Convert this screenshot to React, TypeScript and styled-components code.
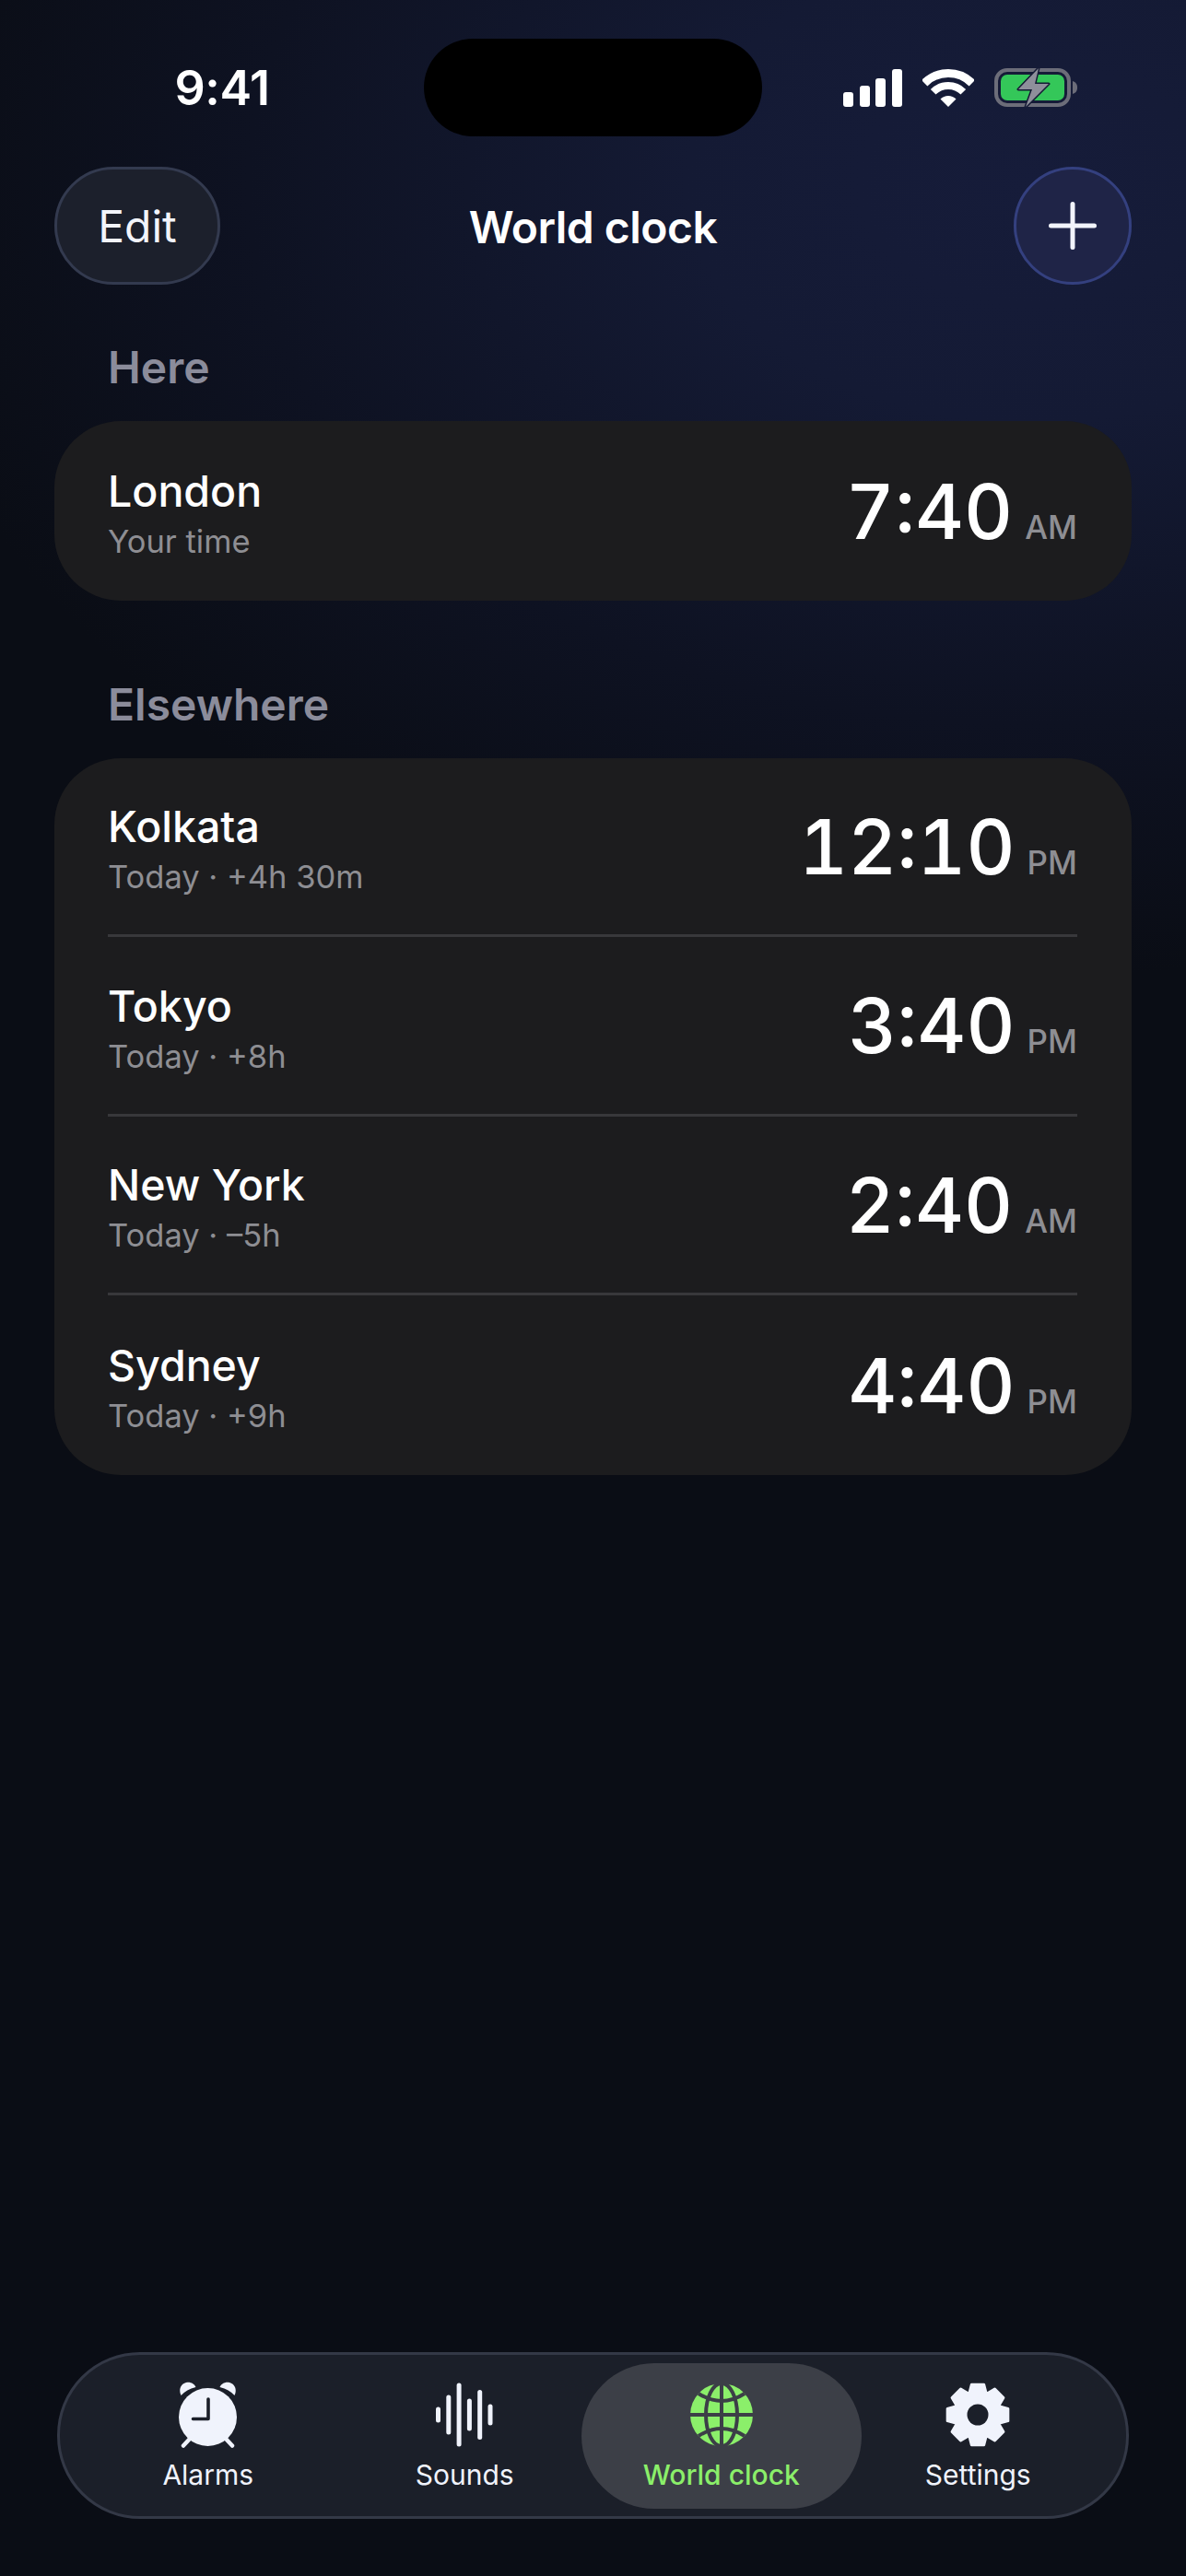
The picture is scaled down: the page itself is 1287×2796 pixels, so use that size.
import React from 'react';
import styled, { createGlobalStyle } from 'styled-components';

const GlobalStyle = createGlobalStyle`
  html, body {
    margin: 0;
    padding: 0;
    background: #0a0d15;
    font-family: Inter, "Noto Sans", sans-serif;
    color: #fff;
  }
`;

const BAR_BG = '#1b1f29';
const PILL_BG = '#3c3f47';

const Screen = styled.div`
  width: 1287px;
  height: 2796px;
  display: flex;
  flex-direction: column;
  overflow: hidden;
  background:
    radial-gradient(ellipse 1250px 860px at 1120px 200px, #161c3a 0%, #141a34 30%, #0e1222 68%, rgba(10, 13, 21, 0) 100%),
    #0a0d15;
`;

const StatusBar = styled.div`
  display: grid;
  grid-template-columns: 460px 367px 460px;
  align-items: center;
  padding-top: 41px;
`;

const Clock = styled.div`
  justify-self: center;
  padding: 2px 0 0 22px;
  font-size: 52px;
  font-weight: 600;
  line-height: 106px;
  letter-spacing: -0.5px;
`;

const Island = styled.div`
  height: 106px;
  border-radius: 53px;
  background: #000;
`;

const StatusIcons = styled.div`
  display: flex;
  align-items: center;
  gap: 22px;
  padding-left: 88px;
  height: 106px;
`;

const Header = styled.div`
  display: grid;
  grid-template-columns: 1fr auto 1fr;
  align-items: center;
  padding: 0 59px;
  margin-top: 32px;
`;

const EditButton = styled.div`
  justify-self: start;
  box-sizing: border-box;
  width: 180px;
  height: 128px;
  border-radius: 64px;
  background: #1c202c;
  border: 3px solid #333a4f;
  display: flex;
  align-items: center;
  justify-content: center;
  font-size: 48px;
  color: #f2f4fb;
`;

const Title = styled.div`
  padding-top: 2px;
  font-size: 48px;
  font-weight: 600;
  letter-spacing: -0.5px;
`;

const AddButton = styled.div`
  justify-self: end;
  box-sizing: border-box;
  width: 128px;
  height: 128px;
  border-radius: 50%;
  background: #1f2447;
  border: 3px solid #34407f;
  display: flex;
  align-items: center;
  justify-content: center;
`;

const SectionLabel = styled.div<{ $top: number }>`
  margin-top: ${(p) => p.$top}px;
  padding-left: 117px;
  height: 56px;
  line-height: 56px;
  font-size: 48px;
  font-weight: 600;
  color: #8b8c9b;
`;

const Card = styled.div`
  margin: 30px 59px 0;
  padding: 0 59px 0 58px;
  background: #1c1c1e;
  border-radius: 72px;
`;

const Row = styled.div<{ $divider?: boolean }>`
  height: 194.5px;
  box-sizing: border-box;
  display: flex;
  align-items: center;
  justify-content: space-between;
  border-bottom: ${(p) => (p.$divider ? '3px solid #38383b' : 'none')};
`;

const Place = styled.div`
  display: flex;
  flex-direction: column;
  gap: 5px;
  padding-top: 9px;
`;

const City = styled.div`
  font-size: 46.5px;
  font-weight: 500;
  line-height: 54px;
`;

const Note = styled.div`
  font-size: 34.5px;
  line-height: 46px;
  color: #8e8e93;
`;

const TimeBlock = styled.div`
  display: flex;
  align-items: baseline;
  gap: 13px;
  padding-top: 3px;
`;

const TimeValue = styled.span`
  font-size: 82px;
  font-weight: 500;
  line-height: 96px;
  font-variant-numeric: tabular-nums;
`;

const Meridiem = styled.span`
  font-size: 35px;
  font-weight: 500;
  color: #8e8e93;
`;

const TabBar = styled.div`
  margin: auto 62px 62px;
  box-sizing: border-box;
  height: 181px;
  border-radius: 90px;
  background: ${BAR_BG};
  border: 3px solid #333846;
  display: grid;
  grid-template-columns: repeat(4, 278.5px);
  justify-content: center;
  align-items: center;
`;

const Tab = styled.div<{ $active?: boolean }>`
  box-sizing: border-box;
  height: 158px;
  margin: 0 ${(p) => (p.$active ? '-13px' : '0')};
  padding-top: 20px;
  border-radius: 79px;
  background: ${(p) => (p.$active ? PILL_BG : 'transparent')};
  display: flex;
  flex-direction: column;
  align-items: center;
`;

const TabIcon = styled.div`
  height: 72px;
  display: flex;
  align-items: center;
  justify-content: center;
`;

const TabLabel = styled.div<{ $active?: boolean }>`
  margin-top: 9px;
  font-size: 30px;
  line-height: 40px;
  font-weight: ${(p) => (p.$active ? 500 : 400)};
  color: ${(p) => (p.$active ? '#8bef6a' : '#f0f3fc')};
`;

const Signal = () => (
  <svg width="64" height="41" viewBox="0 0 64 41" fill="#fff">
    <rect x="0" y="25" width="11" height="16" rx="3" />
    <rect x="18" y="18" width="11" height="23" rx="3" />
    <rect x="35" y="10" width="11" height="31" rx="3" />
    <rect x="53" y="0" width="11" height="41" rx="3" />
  </svg>
);

const Wifi = () => (
  <svg width="56" height="41" viewBox="0 0 56 41" fill="none" stroke="#fff">
    <path d="M2.2 15.2 A36.5 36.5 0 0 1 53.8 15.2" strokeWidth="9" />
    <path d="M11.7 24.7 A23 23 0 0 1 44.3 24.7" strokeWidth="8" />
    <path d="M19.5 32.5 A12 12 0 0 1 36.5 32.5 L28 41 Z" fill="#fff" stroke="none" />
  </svg>
);

const Battery = () => (
  <svg width="90" height="42" viewBox="0 0 90 42">
    <rect x="2" y="2" width="79" height="38" rx="12" fill="none" stroke="#6c6d79" strokeWidth="4" />
    <rect x="7" y="7" width="69" height="28" rx="7" fill="#34c759" />
    <path d="M85 14 C88 15 90 17 90 21 C90 25 88 27 85 28 Z" fill="#6c6d79" />
    <path d="M48 0 L26 23 L41 23 L34 42 L59 17 L44 17 Z" fill="#8e8f9b" stroke="#151a35" strokeWidth="3" strokeLinejoin="round" paintOrder="stroke" />
  </svg>
);

const Plus = () => (
  <svg width="52" height="52" viewBox="0 0 52 52" stroke="#f2f4fb" strokeWidth="5" strokeLinecap="round">
    <path d="M26 2.5 V49.5 M2.5 26 H49.5" />
  </svg>
);

const AlarmIcon = () => (
  <svg width="63" height="72" viewBox="0 0 63 72" fill="#f0f3fc">
    <circle cx="31.5" cy="38.5" r="31.5" />
    <path d="M2.5 15 C-0.5 9 2 2 9 0.8 C13 0.2 17 2.4 18.5 6 C11.5 7.8 6.5 10.5 2.5 15 Z" />
    <path d="M60.5 15 C63.5 9 61 2 54 0.8 C50 0.2 46 2.4 44.5 6 C51.5 7.8 56.5 10.5 60.5 15 Z" />
    <path d="M12 62 L5 69.5 M51 62 L58 69.5" stroke="#f0f3fc" strokeWidth="4.5" strokeLinecap="round" />
    <path d="M32 19 V40.5 H15.5" fill="none" stroke={BAR_BG} strokeWidth="3.6" strokeLinecap="round" strokeLinejoin="round" />
  </svg>
);

const soundBars = [17, 43, 69, 35, 54, 23];

const SoundsIcon = () => (
  <svg width="62" height="70" viewBox="0 0 62 70" fill="#f0f3fc">
    {soundBars.map((h, i) => (
      <rect key={i} x={i * 11.3} y={35 - h / 2} width="5" height={h} rx="2.5" />
    ))}
  </svg>
);

const GlobeIcon = () => (
  <svg width="68" height="68" viewBox="0 0 68 68">
    <circle cx="34" cy="34" r="34" fill="#8bef6a" />
    <g fill="none" stroke={PILL_BG} strokeWidth="4">
      <path d="M34 0 V68" />
      <ellipse cx="34" cy="34" rx="17" ry="34" />
      <path d="M0 34 H68" />
      <path d="M9 11 Q34 27 59 11" />
      <path d="M9 57 Q34 41 59 57" />
    </g>
  </svg>
);

// gear outline with 8 teeth, worked out once rather than typed by hand
const gearPath = (() => {
  const cx = 35;
  const cy = 35;
  const outer = 33.5;
  const root = 25.5;
  const pts: string[] = [];
  for (let i = 0; i < 8; i++) {
    const a = (i * Math.PI) / 4 - Math.PI / 2;
    const step = [
      [root, -0.36],
      [outer, -0.2],
      [outer, 0.2],
      [root, 0.36],
    ];
    step.forEach(([r, d]) => {
      pts.push(`${(cx + r * Math.cos(a + d)).toFixed(2)} ${(cy + r * Math.sin(a + d)).toFixed(2)}`);
    });
  }
  return `M${pts.join(' L')} Z`;
})();

const GearIcon = () => (
  <svg width="70" height="70" viewBox="0 0 70 70">
    <path d={gearPath} fill="#f0f3fc" stroke="#f0f3fc" strokeWidth="3" strokeLinejoin="round" />
    <circle cx="35" cy="35" r="11.5" fill={BAR_BG} />
  </svg>
);

type City = { name: string; note: string; time: string; part: string };

const elsewhere: City[] = [
  { name: 'Kolkata', note: 'Today · +4h 30m', time: '12:10', part: 'PM' },
  { name: 'Tokyo', note: 'Today · +8h', time: '3:40', part: 'PM' },
  { name: 'New York', note: 'Today · –5h', time: '2:40', part: 'AM' },
  { name: 'Sydney', note: 'Today · +9h', time: '4:40', part: 'PM' },
];

const CityRow = ({ city, divider }: { city: City; divider?: boolean }) => (
  <Row $divider={divider}>
    <Place>
      <City>{city.name}</City>
      <Note>{city.note}</Note>
    </Place>
    <TimeBlock>
      <TimeValue>{city.time}</TimeValue>
      <Meridiem>{city.part}</Meridiem>
    </TimeBlock>
  </Row>
);

const App = () => (
  <Screen>
    <GlobalStyle />
    <StatusBar>
      <Clock>9:41</Clock>
      <Island />
      <StatusIcons>
        <Signal />
        <Wifi />
        <Battery />
      </StatusIcons>
    </StatusBar>
    <Header>
      <EditButton>Edit</EditButton>
      <Title>World clock</Title>
      <AddButton>
        <Plus />
      </AddButton>
    </Header>
    <SectionLabel $top={62}>Here</SectionLabel>
    <Card>
      <CityRow city={{ name: 'London', note: 'Your time', time: '7:40', part: 'AM' }} />
    </Card>
    <SectionLabel $top={85}>Elsewhere</SectionLabel>
    <Card>
      {elsewhere.map((c, i) => (
        <CityRow key={c.name} city={c} divider={i < elsewhere.length - 1} />
      ))}
    </Card>
    <TabBar>
      <Tab>
        <TabIcon><AlarmIcon /></TabIcon>
        <TabLabel>Alarms</TabLabel>
      </Tab>
      <Tab>
        <TabIcon><SoundsIcon /></TabIcon>
        <TabLabel>Sounds</TabLabel>
      </Tab>
      <Tab $active>
        <TabIcon><GlobeIcon /></TabIcon>
        <TabLabel $active>World clock</TabLabel>
      </Tab>
      <Tab>
        <TabIcon><GearIcon /></TabIcon>
        <TabLabel>Settings</TabLabel>
      </Tab>
    </TabBar>
  </Screen>
);

export default App;
